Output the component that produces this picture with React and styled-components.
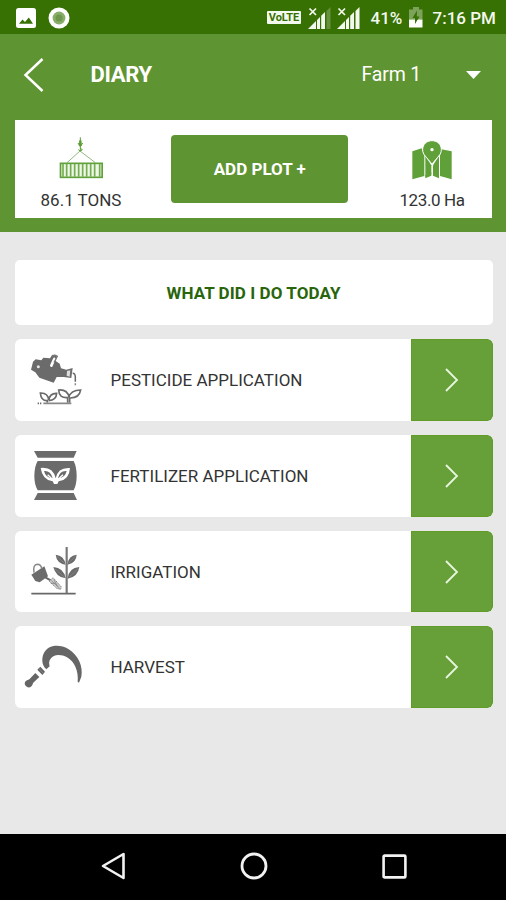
import styled, { createGlobalStyle } from "styled-components";

const GlobalStyle = createGlobalStyle`
  * {
    box-sizing: border-box;
  }
  body {
    margin: 0;
    background: #e8e8e8;
    font-family: Roboto, "Liberation Sans", sans-serif;
  }
  svg {
    display: block;
    flex-shrink: 0;
  }
`;

const Screen = styled.div`
  width: 506px;
  height: 900px;
  display: flex;
  flex-direction: column;
  overflow: hidden;
  background: #e8e8e8;
`;

const StatusBar = styled.div`
  height: 34px;
  flex-shrink: 0;
  display: flex;
  align-items: center;
  padding-top: 1px;
  background: #377003;
  color: #f4f9ef;
`;

const StatusText = styled.span`
  width: ${(props) => props.$width}px;
  margin-left: ${(props) => props.$gap}px;
  font-size: 17px;
  line-height: 20px;
  font-weight: 500;
  white-space: nowrap;
`;

const Volte = styled.span`
  width: 34px;
  height: 13px;
  margin-left: 197px;
  border-radius: 1px;
  background: #f4f9ef;
  color: #377003;
  font-size: 11px;
  font-weight: 700;
  line-height: 13.5px;
  text-align: center;
  letter-spacing: -0.1px;
`;

const Header = styled.header`
  height: 197.5px;
  flex-shrink: 0;
  padding: 0 14px 0 14.5px;
  background: #5f9432;
`;

const Toolbar = styled.div`
  height: 86px;
  display: flex;
  align-items: center;
  padding-bottom: 5px;
  color: #fff;
`;

const BackButton = styled.button`
  width: 76px;
  padding: 0 0 0 8px;
  border: none;
  background: none;
  cursor: pointer;
`;

const Title = styled.h1`
  flex: 1;
  margin: 0;
  font-size: 22px;
  line-height: 26px;
  font-weight: 700;
  letter-spacing: -0.3px;
`;

const FarmSelect = styled.div`
  display: flex;
  align-items: center;
  justify-content: space-between;
  width: 130.5px;
  padding-right: 11.5px;
  font-size: 19.5px;
  line-height: 24px;
  letter-spacing: -0.15px;
`;

const Summary = styled.section`
  height: 98px;
  display: flex;
  justify-content: space-between;
  background: #fff;
`;

const Stat = styled.div`
  width: ${(props) => props.$width}px;
  display: flex;
  flex-direction: column;
  align-items: center;
  padding-top: 15px;
  color: #333;
  font-size: 17px;
  line-height: 20px;
  white-space: nowrap;

  span {
    margin-top: 7px;
    letter-spacing: ${(props) => props.$spacing || 0}px;
  }
`;

const AddButton = styled.button`
  width: 177px;
  height: 68px;
  margin-top: 14.5px;
  padding: 0;
  border: none;
  border-radius: 4px;
  background: #5f9432;
  color: #fff;
  font: 700 17px/20px Roboto, "Liberation Sans", sans-serif;
  cursor: pointer;
`;

const Content = styled.main`
  flex: 1;
  display: flex;
  flex-direction: column;
  gap: 14.2px;
  padding: 28.5px 13.5px 0 14.5px;
`;

const Question = styled.h2`
  height: 65.2px;
  margin: 0;
  border-radius: 5px;
  background: #fff;
  color: #28650c;
  font-size: 17px;
  font-weight: 700;
  line-height: 66px;
  text-align: center;
  letter-spacing: 0.08px;
`;

const Row = styled.div`
  height: 81.5px;
  display: flex;
  align-items: center;
  border-radius: 6px;
  overflow: hidden;
  background: #fff;
`;

const Label = styled.span`
  flex: 1;
  color: #333;
  font-size: 17px;
  white-space: nowrap;
`;

const GoButton = styled.button`
  width: 81.5px;
  height: 100%;
  display: flex;
  align-items: center;
  justify-content: center;
  padding: 0;
  border: none;
  border-radius: 0 6px 6px 0;
  background: #67a038;
  box-shadow: inset 0 0 0 1px #5f9c28;
  cursor: pointer;
`;

const NavBar = styled.nav`
  height: 66.5px;
  flex-shrink: 0;
  display: flex;
  align-items: center;
  justify-content: space-between;
  padding: 0 99.5px 1px 100.5px;
  background: #000;
`;

const PhotoIcon = styled(({ className }) => (
  <svg className={className} width="20" height="20" viewBox="0 0 20 20">
    <rect width="20" height="20" rx="2.5" fill="#fff" />
    <path d="M3 15.8 6.5 11.5 9 14 12.8 9.5 17 15.8Z" fill="#377003" />
  </svg>
))`
  margin-left: 16px;
`;

const RecordIcon = styled(({ className }) => (
  <svg className={className} width="22" height="22" viewBox="0 0 22 22">
    <circle cx="11" cy="11" r="10.5" fill="#fff" />
    <circle cx="11" cy="11" r="6.4" fill="#87ad69" />
    <circle cx="11" cy="11" r="3.5" fill="#6d974b" />
  </svg>
))`
  margin-left: 12px;
`;

// the weak signal leaves its last bar dimmed
const SignalIcon = styled(({ className, weak }) => (
  <svg className={className} width="23" height="22" viewBox="0 0 23 22">
    <path d="M1.5 1.5 8 8M8 1.5 1.5 8" stroke="#f4f9ef" strokeWidth="1.7" />
    <path d="M0 22 8 14V22ZM9 22V13L12 10V22ZM13.2 22V8.8L17 5V22Z" fill="#f4f9ef" />
    <path d="M18.5 22V4L22.5 0V22Z" fill="#f4f9ef" opacity={weak ? 0.25 : 1} />
  </svg>
))`
  margin-left: 6.5px;
`;

const Battery = () => (
  <svg width="14" height="21" viewBox="0 0 14 21">
    <path d="M4 0H10V2.5H13.5V12.5H0V2.5H4Z" fill="#7da35b" />
    <path d="M0 12.5H13.5V20.5H0Z" fill="#fff" />
    <path d="M8 3.5 3.5 11H6V17L10.5 9.5H7.8Z" fill="#377003" />
  </svg>
);

const CraneIcon = () => (
  <svg width="44" height="48" viewBox="177 75 132 144">
    <path d="M241 82V123M234 99 241 110 248 99M235 119Q242 128 247 119L241 115" fill="none" stroke="#5b9d32" strokeWidth="3" />
    <path d="M238 91H244L246 107H236Z" fill="#5b9d32" />
    <path d="M201 158 240 123 286 158" fill="none" stroke="#79a968" strokeWidth="2.5" />
    <rect x="181.5" y="160" width="125" height="42" fill="#edf6e7" stroke="#61a13a" strokeWidth="5" />
    <path d="M189 162V200M200 162V200M212 162V200M224 162V200M236 162V200M248 162V200M260 162V200M272 162V200M284 162V200M299 162V200" stroke="#74ae51" strokeWidth="5" />
  </svg>
);

const MapIcon = () => (
  <svg width="44" height="48" viewBox="472 75 132 144">
    <g fill="#60a039">
      <path d="M479 124 507 115 512 130 515 137V198L479 208Z" />
      <path d="M518 142 536 170V196L518 205Z" transform="translate(0 -4)" />
      <path d="M541 166 559 138V201L541 192Z" />
      <path d="M562 137 566 118 597 124V208L562 198Z" />
      <path d="M518 196 536 188V197L518 205ZM541 188 559 196V205L541 197Z" />
      <path
        d="M538 92C522 92 510 103 510 119C510 135 522 140 538 163C554 140 566 135 566 119C566 103 554 92 538 92Z"
        stroke="#fff"
        strokeWidth="3"
      />
      <circle cx="538" cy="119" r="5" fill="#fff" />
    </g>
  </svg>
);

const PesticideIcon = () => (
  <svg width="96" height="81.3" viewBox="14 13 288 244">
    <path d="M76 74 93 77 99 69 119 71 126 60 140 64 136 79 148 87 152 101 168 105 187 100 183 130 160 127 139 127 130 144 87 129 75 113 62 105 68 81Z" fill="#6b6b6b" />
    <path d="M132 73 123 93" stroke="#fff" strokeWidth="8" strokeLinecap="round" />
    <path d="M124 66Q131 58 141 65L131 84" fill="none" stroke="#777" strokeWidth="4" />
    <circle cx="84" cy="96" r="4.5" fill="#e8e8e8" />
    <path d="M170 109 180 107 178 126 169 123Z" fill="#ddd" />
    <path d="M187 116Q195 116 195 128V141" fill="none" stroke="#666" strokeWidth="4.5" />
    <path d="M195 146V152" stroke="#888" strokeWidth="4.5" />
    <g fill="none" stroke="#6b6b6b" strokeWidth="5">
      <path d="M111 204V198Q92 199 90 175Q113 174 115 196Q119 175 139 176Q138 197 115 198" />
      <path d="M172 204V189Q146 191 145 166Q172 164 176 188Q181 166 211 166Q207 191 178 190V204" />
      <path d="M99 206H183" stroke="#888" />
      <path d="M82 206H94" strokeDasharray="4 3" />
    </g>
  </svg>
);

const FertilizerIcon = () => (
  <svg width="96" height="81.3" viewBox="14 15 288 244">
    <g fill="#6b6b6b">
      <path d="M71 63H199L190 83H82Z" />
      <path d="M82 93H190Q199 110 199 137Q199 164 190 181H82Q72 164 72 137Q72 110 82 93Z" />
      <path d="M82 189H190L200 210H71Z" />
    </g>
    <path d="M91 114Q128 110 136 145Q143 111 179 114Q177 150 145 154L141 162H131L127 154Q96 150 91 114Z" fill="#fff" />
    <path d="M101 123Q121 121 127 145Q106 144 101 123ZM169 123Q148 121 143 145Q164 145 169 123Z" fill="#6b6b6b" />
    <path d="M112 134 128 149M158 134 142 149" stroke="#fff" strokeWidth="4" />
  </svg>
);

const IrrigationIcon = () => (
  <svg width="96" height="81.3" viewBox="14 15 288 244">
    <path d="M63 203H196" stroke="#686868" strokeWidth="5.5" />
    <path d="M169 63V202" stroke="#777" strokeWidth="6.5" />
    <g fill="#6b6b6b">
      <path d="M166 116Q139 112 136 86Q161 88 166 116Z" />
      <path d="M172 116Q173 89 199 86Q198 111 172 116Z" />
      <path d="M166 157Q136 153 129 123Q160 125 166 157Z" />
      <path d="M172 158Q175 125 207 123Q203 153 172 158Z" />
      <path d="M63 146 102 121 113 151 88 169 75 165Z" />
    </g>
    <path d="M140 91 164 114M195 91 175 112M134 129 164 155M202 129 175 155" stroke="#999" strokeWidth="1.5" />
    <path d="M71 140Q67 116 81 115Q92 115 94 128" fill="none" stroke="#888" strokeWidth="4.5" />
    <path d="M105 154 121 163" stroke="#686868" strokeWidth="6" />
    <path d="M117 166 128 155 153 183 151 190 139 187Z" fill="#ccc" stroke="#888" strokeWidth="3" strokeDasharray="5 2" />
    <path d="M123 164 147 186M131 162 142 182M121 172 136 172" stroke="#777" strokeWidth="2" />
  </svg>
);

const SickleIcon = () => (
  <svg width="96" height="81.3" viewBox="15 13 288 244">
    <g fill="#666">
      <path d="M109 140C93 127 94 101 105 86C120 65 151 65 175 79C205 97 220 132 214 162L207 180L203 177C206 147 195 118 171 104C151 92 127 95 119 113C116 120 118 126 119 131Z" />
      <path d="M91 132 105 147 97 157 82 141Z" />
      <path d="M76 151 88 163 69 181C68 190 60 196 53 194C46 191 42 184 45 178C48 173 54 173 58 170Z" />
    </g>
    <path d="M85 136 101 153" stroke="#999" strokeWidth="1.5" />
  </svg>
);

const tasks = [
  { label: "PESTICIDE APPLICATION", Icon: PesticideIcon },
  { label: "FERTILIZER APPLICATION", Icon: FertilizerIcon },
  { label: "IRRIGATION", Icon: IrrigationIcon },
  { label: "HARVEST", Icon: SickleIcon },
];

const App = () => {
  return (
    <Screen>
      <GlobalStyle />
      <StatusBar>
        <PhotoIcon />
        <RecordIcon />
        <Volte>VoLTE</Volte>
        <SignalIcon weak />
        <SignalIcon />
        <StatusText $gap={10.5} $width={38}>41%</StatusText>
        <Battery />
        <StatusText $gap={10} $width={66}>7:16 PM</StatusText>
      </StatusBar>

      <Header>
        <Toolbar>
          <BackButton aria-label="Back">
            <svg width="22" height="36" viewBox="0 0 22 36">
              <path d="M19.5 2 2.5 18 19.5 34" fill="none" stroke="#fff" strokeWidth="2.5" />
            </svg>
          </BackButton>
          <Title>DIARY</Title>
          <FarmSelect>
            Farm 1
            <svg width="15" height="8" viewBox="0 0 15 8">
              <path d="M0 0H15L7.5 8Z" fill="#fff" />
            </svg>
          </FarmSelect>
        </Toolbar>

        <Summary>
          <Stat $width={133}>
            <CraneIcon />
            <span>86.1 TONS</span>
          </Stat>
          <AddButton>ADD PLOT +</AddButton>
          <Stat $width={120} $spacing={-0.4}>
            <MapIcon />
            <span>123.0 Ha</span>
          </Stat>
        </Summary>
      </Header>

      <Content>
        <Question>WHAT DID I DO TODAY</Question>
        {tasks.map(({ label, Icon }) => (
          <Row key={label}>
            <Icon />
            <Label>{label}</Label>
            <GoButton aria-label={label}>
              <svg width="14" height="24" viewBox="0 0 14 24">
                <path d="M1 1 12 12 1 23" fill="none" stroke="#e9f6df" strokeWidth="1.8" />
              </svg>
            </GoButton>
          </Row>
        ))}
      </Content>

      <NavBar>
        <svg width="25" height="28" viewBox="0 0 25 28">
          <path d="M2 14 22.5 2V26Z" fill="none" stroke="#f2f2f2" strokeWidth="2.6" strokeLinejoin="round" />
        </svg>
        <svg width="28" height="28" viewBox="0 0 28 28">
          <circle cx="14" cy="14" r="12" fill="none" stroke="#f2f2f2" strokeWidth="2.8" />
        </svg>
        <svg width="25" height="25" viewBox="0 0 25 25">
          <rect x="1.6" y="1.6" width="21.8" height="21.8" rx="1" fill="none" stroke="#f2f2f2" strokeWidth="2.6" />
        </svg>
      </NavBar>
    </Screen>
  );
};

export default App;
